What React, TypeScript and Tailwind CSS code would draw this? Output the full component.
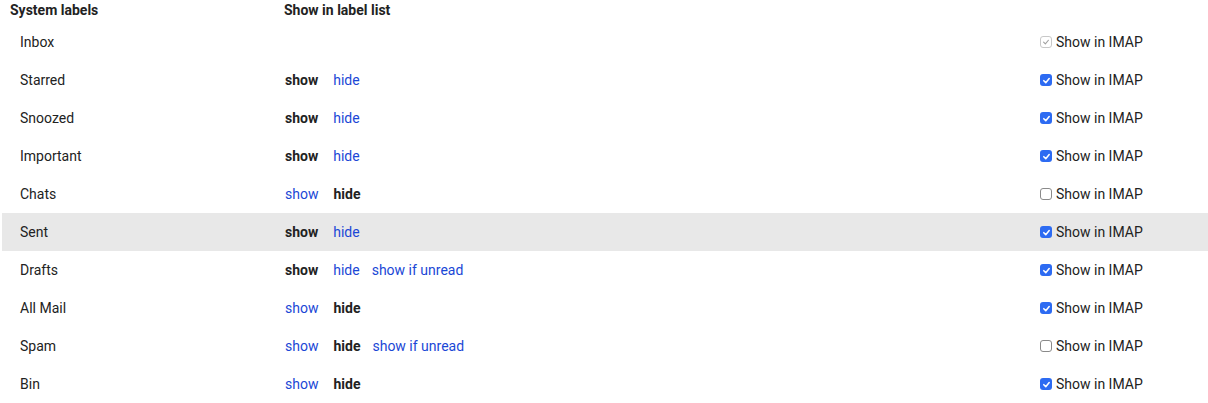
import React from "react";

type Opt = "show" | "hide" | "unread";

type Row = {
  name: string;
  actions: { label: string; value: Opt }[];
  selected: Opt | null;
  imap: "on" | "off" | "locked";
};

const rows: Row[] = [
  { name: "Inbox", actions: [], selected: null, imap: "locked" },
  { name: "Starred", actions: [{ label: "show", value: "show" }, { label: "hide", value: "hide" }], selected: "show", imap: "on" },
  { name: "Snoozed", actions: [{ label: "show", value: "show" }, { label: "hide", value: "hide" }], selected: "show", imap: "on" },
  { name: "Important", actions: [{ label: "show", value: "show" }, { label: "hide", value: "hide" }], selected: "show", imap: "on" },
  { name: "Chats", actions: [{ label: "show", value: "show" }, { label: "hide", value: "hide" }], selected: "hide", imap: "off" },
  { name: "Sent", actions: [{ label: "show", value: "show" }, { label: "hide", value: "hide" }], selected: "show", imap: "on" },
  {
    name: "Drafts",
    actions: [
      { label: "show", value: "show" },
      { label: "hide", value: "hide" },
      { label: "show if unread", value: "unread" },
    ],
    selected: "show",
    imap: "on",
  },
  { name: "All Mail", actions: [{ label: "show", value: "show" }, { label: "hide", value: "hide" }], selected: "hide", imap: "on" },
  {
    name: "Spam",
    actions: [
      { label: "show", value: "show" },
      { label: "hide", value: "hide" },
      { label: "show if unread", value: "unread" },
    ],
    selected: "hide",
    imap: "off",
  },
  { name: "Bin", actions: [{ label: "show", value: "show" }, { label: "hide", value: "hide" }], selected: "hide", imap: "on" },
];

function Checkbox({ state }: { state: "on" | "off" | "locked" }) {
  if (state === "on") {
    return (
      <span className="flex h-[12px] w-[12px] items-center justify-center rounded-[3px] bg-[#2d6bf2]">
        <svg width="9" height="9" viewBox="0 0 10 10">
          <path d="M2 5.2 L4.2 7.4 L8 2.8" fill="none" stroke="white" strokeWidth="1.7" strokeLinecap="round" strokeLinejoin="round" />
        </svg>
      </span>
    );
  }
  if (state === "locked") {
    return (
      <span className="flex h-[12px] w-[12px] items-center justify-center rounded-[3px] border border-[#c8c8c8] bg-white">
        <svg width="8" height="8" viewBox="0 0 10 10">
          <path d="M2 5.2 L4.2 7.4 L8 2.8" fill="none" stroke="#a0a0a0" strokeWidth="1.4" strokeLinecap="round" strokeLinejoin="round" />
        </svg>
      </span>
    );
  }
  return <span className="block h-[12px] w-[12px] rounded-[3px] border border-[#8a8a8a] bg-white" />;
}

export default function App() {
  return (
    <div className="min-h-[403px] bg-white pl-[2px] font-['Roboto',sans-serif] text-[14px] text-[#222]">
      {/* Header */}
      <div className="flex h-[23px] leading-5">
        <div className="w-[282px] pl-[8px] font-bold">System labels</div>
        <div className="flex-1 font-bold">Show in label list</div>
      </div>

      {rows.map((row) => (
        <div
          key={row.name}
          className={`flex h-[38px] items-center ${row.name === "Sent" ? "bg-[#e8e8e8]" : ""}`}
        >
          <div className="w-[282px] pl-[18px]">{row.name}</div>
          <div className="flex flex-1 gap-3 pl-[1px]">
            {row.actions.map((a, i) => (
              <span
                key={a.label}
                className={`${i === 0 ? "mr-[3px]" : ""} ${
                  a.value === row.selected ? "font-bold" : "cursor-pointer text-[#1a47d6]"
                }`}
              >
                {a.label}
              </span>
            ))}
          </div>
          <div className="flex w-[168px] items-center gap-[4px]">
            <Checkbox state={row.imap} />
            <span>Show in IMAP</span>
          </div>
        </div>
      ))}
    </div>
  );
}
